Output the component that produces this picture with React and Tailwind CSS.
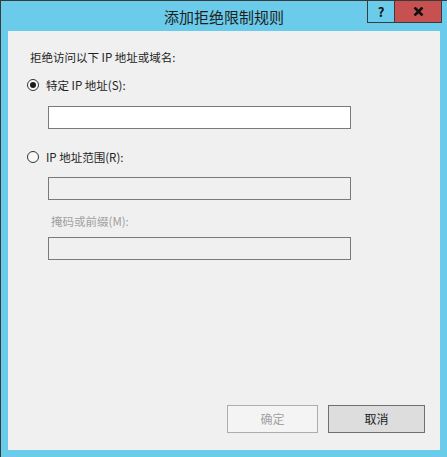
import React from "react";

const font = { fontFamily: '"Noto Sans CJK SC", "Liberation Sans", sans-serif' };

function Radio({ checked, label }) {
  return (
    <div className="flex items-center h-4 ml-[19px]">
      <span className="w-3 h-3 rounded-full border border-[#333333] bg-[#f8f8f8] flex items-center justify-center">
        {checked && <span className="w-[6px] h-[6px] rounded-full bg-[#1a1a1a]" />}
      </span>
      <span className="ml-[7px] text-[11.5px] leading-4 text-[#1e1e1e]">{label}</span>
    </div>
  );
}

function TextBox({ disabled, className }) {
  return (
    <div
      className={
        "ml-10 w-[303px] h-[23px] border border-[#7a7a7a] " +
        (disabled ? "bg-[#f0f0f0] " : "bg-white ") +
        className
      }
    />
  );
}

export default function App() {
  return (
    <div
      className="w-[447px] h-[457px] bg-[#6bcbea] border-l border-t border-[#3a3a3a] flex flex-col relative"
      style={font}
    >
      <div className="h-[30px] flex items-center justify-center">
        <span className="text-[15px] text-[#1e1e1e] mt-[2px]">添加拒绝限制规则</span>
      </div>

      <div className="absolute top-0 right-[5px] flex h-[22px] border border-t-0 border-[#3c3c3c]">
        <div className="w-[27px] flex items-center justify-center border-r border-[#3c3c3c] text-[13px] font-bold text-[#111]">
          ?
        </div>
        <div className="w-[46px] bg-[#c75050] flex items-center justify-center">
          <svg width="11" height="9" viewBox="0 0 11 9">
            <path d="M1.5 0.5 L9.5 8.5 M9.5 0.5 L1.5 8.5" stroke="#111" strokeWidth="2.6" />
          </svg>
        </div>
      </div>

      <div className="ml-[7px] w-[432px] h-[419px] bg-[#f0f0f0] flex flex-col">
        <div className="mt-[18px] ml-[22px] text-[11.5px] leading-4 text-[#1e1e1e]">
          拒绝访问以下 IP 地址或域名:
        </div>
        <div className="mt-3">
          <Radio checked label="特定 IP 地址(S):" />
        </div>
        <TextBox className="mt-[13px]" />
        <div className="mt-5">
          <Radio label="IP 地址范围(R):" />
        </div>
        <TextBox disabled className="mt-3" />
        <div className="mt-[13px] ml-[43px] text-[11.5px] leading-4 text-[#a0a0a0]">掩码或前缀(M):</div>
        <TextBox disabled className="mt-2" />

        <div className="mt-auto mb-[17px] mr-[15px] flex justify-end gap-[10px]">
          <button className="w-[91px] h-[28px] bg-[#f4f4f4] border border-[#adadad] text-[12px] text-[#a3a3a3]">
            确定
          </button>
          <button className="w-[97px] h-[28px] bg-[#dddddd] border border-[#707070] text-[12px] text-[#1a1a1a]">
            取消
          </button>
        </div>
      </div>
    </div>
  );
}
